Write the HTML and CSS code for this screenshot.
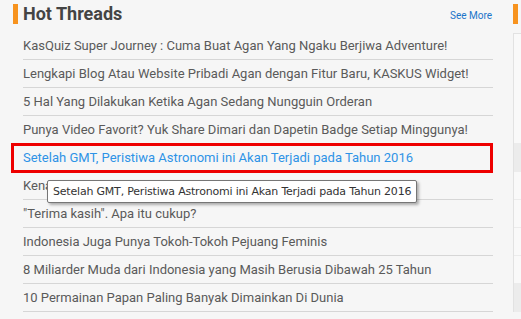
FILE: index.html
```html
<!DOCTYPE html>
<html lang="en">
<head>
    <meta charset="UTF-8">
    <title>Hot Threads</title>
    <link rel="stylesheet" href="styles.css">
</head>
<body>
    <div class="page">
        <div class="main">
            <div class="header">
                <h2 class="title">Hot Threads</h2>
                <a href="#" class="see-more">See More</a>
            </div>
            <ul class="threads">
                <li><a href="#">KasQuiz Super Journey : Cuma Buat Agan Yang Ngaku Berjiwa Adventure!</a></li>
                <li><a href="#">Lengkapi Blog Atau Website Pribadi Agan dengan Fitur Baru, KASKUS Widget!</a></li>
                <li><a href="#">5 Hal Yang Dilakukan Ketika Agan Sedang Nungguin Orderan</a></li>
                <li><a href="#">Punya Video Favorit? Yuk Share Dimari dan Dapetin Badge Setiap Minggunya!</a></li>
                <li class="hover"><a href="#">Setelah GMT, Peristiwa Astronomi ini Akan Terjadi pada Tahun 2016</a></li>
                <li><a href="#">Kenapa Ada Orang yang Suka Pamer di Media Sosial?</a></li>
                <li><a href="#">"Terima kasih". Apa itu cukup?</a></li>
                <li><a href="#">Indonesia Juga Punya Tokoh-Tokoh Pejuang Feminis</a></li>
                <li><a href="#">8 Miliarder Muda dari Indonesia yang Masih Berusia Dibawah 25 Tahun</a></li>
                <li><a href="#">10 Permainan Papan Paling Banyak Dimainkan Di Dunia</a></li>
            </ul>
            <div class="highlight"></div>
            <div class="tooltip">Setelah GMT, Peristiwa Astronomi ini Akan Terjadi pada Tahun 2016</div>
        </div>
        <div class="side">
            <div class="side-header"></div>
            <div class="side-box">
                <div class="side-row"></div>
                <div class="side-row shade"></div>
                <div class="side-row"></div>
                <div class="side-row"></div>
                <div class="side-row"></div>
                <div class="side-row"></div>
                <div class="side-row shade"></div>
            </div>
        </div>
    </div>
</body>
</html>
```

FILE: styles.css
```css
/* Base */
body {
    margin: 0;
    background: #f6f6f6;
    font-family: Roboto, "Liberation Sans", sans-serif;
    color: #555;
    overflow: hidden;
}

.page {
    display: flex;
    gap: 20px;
}

.main {
    position: relative;
    width: 480px;
    padding-left: 13px;
}

/* Header */
.header {
    display: flex;
    align-items: center;
    height: 28px;
    margin-bottom: 4px;
}
.title {
    margin: 0;
    flex: 1;
    font-size: 18px;
    font-weight: bold;
    color: #444;
    border-left: 5px solid #f7931e;
    padding-left: 5px;
    line-height: 20px;
}
.see-more {
    font-size: 10px;
    color: #1b75c9;
    text-decoration: none;
    margin-right: 1px;
    padding-top: 3px;
}

/* Thread list */
.threads {
    list-style: none;
    margin: 0 0 0 10px;
    padding: 0;
}
.threads li {
    height: 27px;
    line-height: 27px;
    border-bottom: 1px solid #d6d6d6;
    font-size: 13px;
    white-space: nowrap;
}
.threads a {
    color: #5a5a5a;
    text-decoration: none;
}
.threads li.hover a {
    color: #2e93e6;
}

/* Annotation box over the hovered row */
.highlight {
    position: absolute;
    left: 11px;
    top: 143px;
    width: 476px;
    height: 24px;
    border: 3px solid #ee0000;
}

.tooltip {
    position: absolute;
    left: 47px;
    top: 180px;
    padding: 2px 5px;
    background: #fff;
    border: 1px solid #767676;
    border-radius: 2px;
    box-shadow: 2px 2px 3px rgba(0, 0, 0, 0.3);
    font-family: "DejaVu Sans", sans-serif;
    font-size: 11px;
    letter-spacing: -0.2px;
    color: #333;
    white-space: nowrap;
    line-height: 17px;
}

/* Side column */
.side {
    flex: 1;
}
.side-header {
    margin-top: 4px;
    height: 20px;
    border-left: 5px solid #f7931e;
}
.side-box {
    margin-top: 9px;
    background: #f9f9f9;
    border: 1px solid #e2e2e2;
    border-right: none;
    border-bottom: none;
    padding-top: 82px;
}
.side-row {
    box-sizing: border-box;
    height: 28px;
    border-bottom: 1px solid #ececec;
}
.side-row.shade {
    background: #ececec;
}
```
